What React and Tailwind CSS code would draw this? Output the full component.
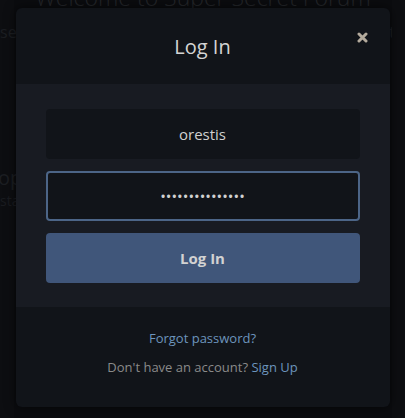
import React from "react";

const LoginModal = () => {
  return (
    <div className="absolute inset-0 flex justify-center">
      <div className="mt-2 w-[374px] h-[399px] flex flex-col rounded-md overflow-hidden bg-[#111419] shadow-[0_0_12px_rgba(0,0,0,0.6)]">
        <div className="relative h-[76px] flex items-center justify-center shrink-0">
          <h2 className="text-[20px] text-[#d4d4d4] leading-none mt-[1px]">Log In</h2>
          <button type="button" className="absolute right-[18px] top-[20px] p-1">
            <svg width="11" height="11" viewBox="0 0 11 11">
              <path d="M2 2 L9 9 M9 2 L2 9" stroke="#b3aa9c" strokeWidth="3" strokeLinecap="round" />
            </svg>
          </button>
        </div>
        <div className="bg-[#181b22] px-[30px] pt-[25px] h-[223px] flex flex-col gap-3 shrink-0">
          <input
            type="text"
            readOnly
            value="orestis"
            className="h-[50px] w-full rounded bg-[#111419] text-center text-[15px] text-[#d0d0d0] outline-none border-2 border-transparent"
          />
          <input
            type="password"
            readOnly
            value="orestispassword"
            className="h-[50px] w-full rounded bg-[#111419] text-center text-[15px] text-[#d0d0d0] outline-none border-2 border-[#4c6587]"
          />
          <button
            type="button"
            className="h-[50px] w-full rounded bg-[#40567a] text-[15px] font-bold text-[#d2d2d2]"
          >
            Log In
          </button>
        </div>
        <div className="flex-1 flex flex-col items-center pt-[22px] gap-[10px] text-[13px]">
          <a className="text-[#6d95bd] leading-[19px]">Forgot password?</a>
          <p className="text-[#8a8a8a] leading-[19px]">
            Don't have an account? <a className="text-[#6d95bd]">Sign Up</a>
          </p>
        </div>
      </div>
    </div>
  );
};

export default function App() {
  return (
    <div
      className="relative w-[405px] h-[418px] overflow-hidden bg-[#0b0c0f]"
      style={{ fontFamily: '"Open Sans", "Noto Sans", sans-serif' }}
    >
      <div className="absolute inset-0 flex">
        <div className="w-[14px] bg-[#0d0e11]" />
        <div className="flex-1 flex flex-col">
          <h1 className="text-[23px] font-light leading-none text-center text-[#24262a] mt-[-14px] whitespace-nowrap">
            Welcome to Super Secret Forum
          </h1>
          <div className="flex justify-between text-[16px] leading-none text-[#1c1e22] mt-[15px] whitespace-nowrap">
            <span className="-ml-[14px]">se</span>
            <span className="mr-[-12px]">ate</span>
          </div>
          <div className="mt-[128px] text-[20px] leading-none text-[#1c1e22] -ml-[16px]">op</div>
          <div className="mt-[6px] text-[14px] leading-none text-[#1a1c20] -ml-[14px]">sta</div>
        </div>
        <div className="w-[13px] bg-[#0d0e11]" />
      </div>
      <LoginModal />
    </div>
  );
}
